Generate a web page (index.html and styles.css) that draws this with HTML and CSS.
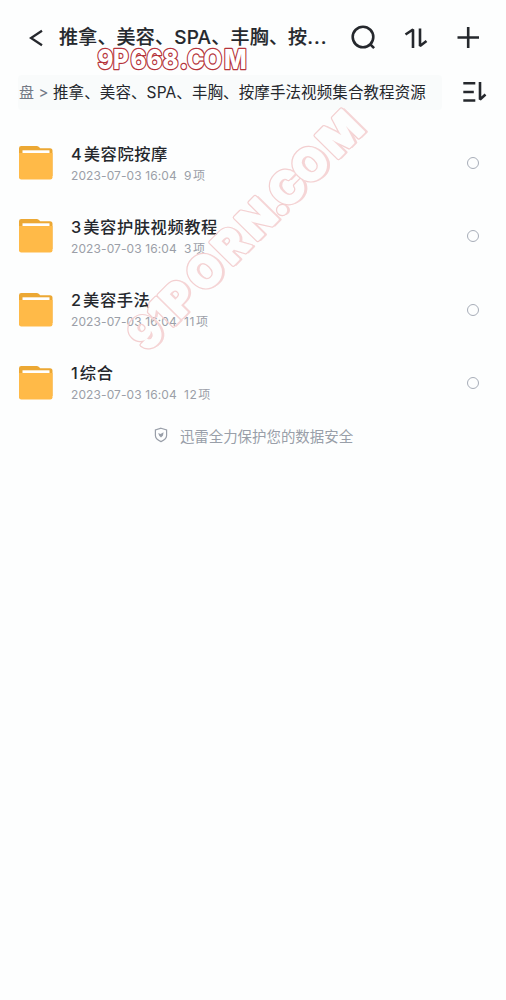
FILE: index.html
```html
<!DOCTYPE html>
<html lang="zh-CN">
<head>
<meta charset="utf-8">
<title>推拿、美容、SPA</title>
<link rel="stylesheet" href="styles.css">
</head>
<body>
<svg class="defs" width="0" height="0">
  <symbol id="folder" viewBox="0 0 34 34">
    <path d="M0 30V2.2Q0 0 2.2 0H17.5Q19 0 20 1L21.2 2.2H31Q33.5 2.2 33.5 4.7V30Z" fill="#eca834"/>
    <path d="M3.5 4.3h27v4h-27z" fill="#fff"/>
    <path d="M0 7H33.500V31.200Q33.500 33.500 31.200 33.500H2.300Q0 33.500 0 31.200Z" fill="#ffba48"/>
  </symbol>
</svg>
<header class="topbar">
  <svg class="back" width="16" height="18" viewBox="0 0 16 18"><path d="M13 1.8 2 9l11 7.2"/></svg>
  <h1 class="title">推拿、美容、SPA、丰胸、按<span class="dots">...</span></h1>
  <svg class="tool" width="28" height="28" viewBox="0 0 28 28"><circle cx="13" cy="13" r="10.3"/><path d="m20.300 20.300 3.800 3.800"/></svg>
  <svg class="tool sort" width="28" height="28" viewBox="0 0 28 28"><path d="M3.500 10.500 11 5.500V24M18 4.500V22L24.500 17"/></svg>
  <svg class="tool" width="28" height="28" viewBox="0 0 28 28"><path d="M3.500 13.500h21.500M14.200 3v21"/></svg>
</header>
<nav class="pathbar">
  <div class="crumbs"><span class="parent">盘 &gt;</span><span class="current">推拿、美容、SPA、丰胸、按摩手法视频集合教程资源</span></div>
  <svg class="tool sort" width="26" height="24" viewBox="0 0 26 24"><path d="M1.300 3.300h12M1.300 12h10.500M1.300 20.500h12M18 2V19.500l5.500-5"/></svg>
</nav>
<main>
  <ul class="files">
    <li class="file"><svg class="folder"><use href="#folder"/></svg><div class="info"><h2><b>4</b>美容院按摩</h2><p><span class="date">2023-07-03 16:04</span>9<i>项</i></p></div><span class="radio"></span></li>
    <li class="file"><svg class="folder"><use href="#folder"/></svg><div class="info"><h2><b>3</b>美容护肤视频教程</h2><p><span class="date">2023-07-03 16:04</span>3<i>项</i></p></div><span class="radio"></span></li>
    <li class="file"><svg class="folder"><use href="#folder"/></svg><div class="info"><h2><b>2</b>美容手法</h2><p><span class="date">2023-07-03 16:04</span>11<i>项</i></p></div><span class="radio"></span></li>
    <li class="file"><svg class="folder"><use href="#folder"/></svg><div class="info"><h2><b>1</b>综合</h2><p><span class="date">2023-07-03 16:04</span>12<i>项</i></p></div><span class="radio"></span></li>
  </ul>
  <p class="safety"><svg width="14" height="16" viewBox="0 0 14 16"><path d="M7 1.200 12.600 3v5.500c0 3-2.500 4.800-5.600 6.100-3.100-1.300-5.600-3.100-5.600-6.100V3Z"/><path class="mark" d="m4.200 6 2.300 1L9.600 5.200 9 8.500 7 10.600 5.200 8.800Z"/></svg>迅雷全力保护您的数据安全</p>
</main>
<svg class="overlay" width="506" height="400" viewBox="0 0 506 400">
  <g transform="translate(0 69) scale(1 1.140)">
    <text class="top" y="0" x="97.500 113 130.500 146.500 162.500 179.500 187 203.500 224">9P668.COM</text>
  </g>
  <g transform="translate(153 346.500) rotate(-45.500)">
    <mask id="diag-out" maskUnits="userSpaceOnUse" x="-50" y="-80" width="400" height="140"><path fill="#fff" d="M-50-80h400V60H-50z"/><text class="diag diag-mask" y="0" x="-9 20 38 73 112 147 180 191 223 262">91PORN.COM</text></mask>
    <g mask="url(#diag-out)">
      <text class="diag diag-line" y="0" x="-9 20 38 73 112 147 180 191 223 262">91PORN.COM</text>
      <text class="diag diag-shade" y="2" x="-7 22 40 75 114 149 182 193 225 264">91PORN.COM</text>
    </g>
  </g>
</svg>
</body>
</html>
```
FILE: styles.css
```css
* { box-sizing: border-box; margin: 0; padding: 0; }
body { width: 506px; height: 1000px; overflow: hidden; position: relative; background: #fdfefe; color: #25282d; font-family: Inter, "Noto Sans CJK SC", sans-serif; }
.defs { display: block; }
.topbar { height: 74px; display: flex; align-items: center; padding: 2px 0 0 29px; }
.back, .tool { fill: none; stroke: #25282d; stroke-width: 2.3; flex: none; }
.tool { stroke-width: 2.6; }
.sort { stroke-linejoin: bevel; }
.title { width: 291px; margin-left: 14px; font-size: 19px; line-height: 28px; font-weight: 500; letter-spacing: .2px; white-space: nowrap; -webkit-text-stroke: .15px #25282d; }
.dots { letter-spacing: 1px; }
.topbar .tool + .tool { margin-left: 24px; }
.pathbar { display: flex; align-items: center; padding-left: 18px; height: 36px; }
.crumbs { width: 424px; height: 35px; padding-left: 1px; margin-right: 20px; border-radius: 4px; background: #f9fbfb; font-size: 15.500px; line-height: 36px; letter-spacing: .1px; white-space: nowrap; }
.parent { display: inline-block; width: 34px; color: #737985; font-size: 15px; }
.files { list-style: none; padding-top: 16.700px; }
.file { height: 73.200px; display: flex; align-items: center; padding: 0 27px 0 18.500px; }
.folder { width: 34px; height: 34px; }
.info { flex: 1; margin-left: 18.500px; padding-top: 1px; }
.info h2 { font-size: 16.300px; line-height: 24px; font-weight: 500; letter-spacing: .55px; white-space: nowrap; }
.info h2 b { font-weight: 500; margin-right: 1.500px; }
.info p { color: #9b9fa8; font-size: 12px; line-height: 20px; letter-spacing: .55px; white-space: nowrap; }
.info i { font-style: normal; margin-left: 1px; }
.date { display: inline-block; width: 113px; letter-spacing: .1px; }
.radio { width: 12px; height: 12px; border: 1px solid #a7adb8; border-radius: 50%; }
.safety { display: flex; justify-content: center; align-items: center; gap: 12px; height: 30px; margin-top: 1px; padding-left: 1px; color: #999fa9; font-size: 14.450px; }
.safety svg { fill: none; stroke: #999fa9; stroke-width: 1.200; }
.safety .mark { fill: #999fa9; stroke: none; }
.overlay { position: absolute; left: 0; top: 0; pointer-events: none; }
.overlay text { font-family: Inter, sans-serif; font-weight: 900; stroke-linejoin: round; }
.overlay .top { font-size: 24px; font-weight: 800; fill: #fff; stroke: #b5343b; stroke-width: 2.200; paint-order: stroke; }
.overlay .diag { font-size: 44px; font-weight: 800; }
.diag-mask { fill: #000; stroke: #000; stroke-width: 2; }
.diag-line { fill: none; stroke: #f3cfd0; stroke-width: 4.400; }
.diag-shade { fill: #f5d5d6; stroke: #f5d5d6; stroke-width: 2; }
```
